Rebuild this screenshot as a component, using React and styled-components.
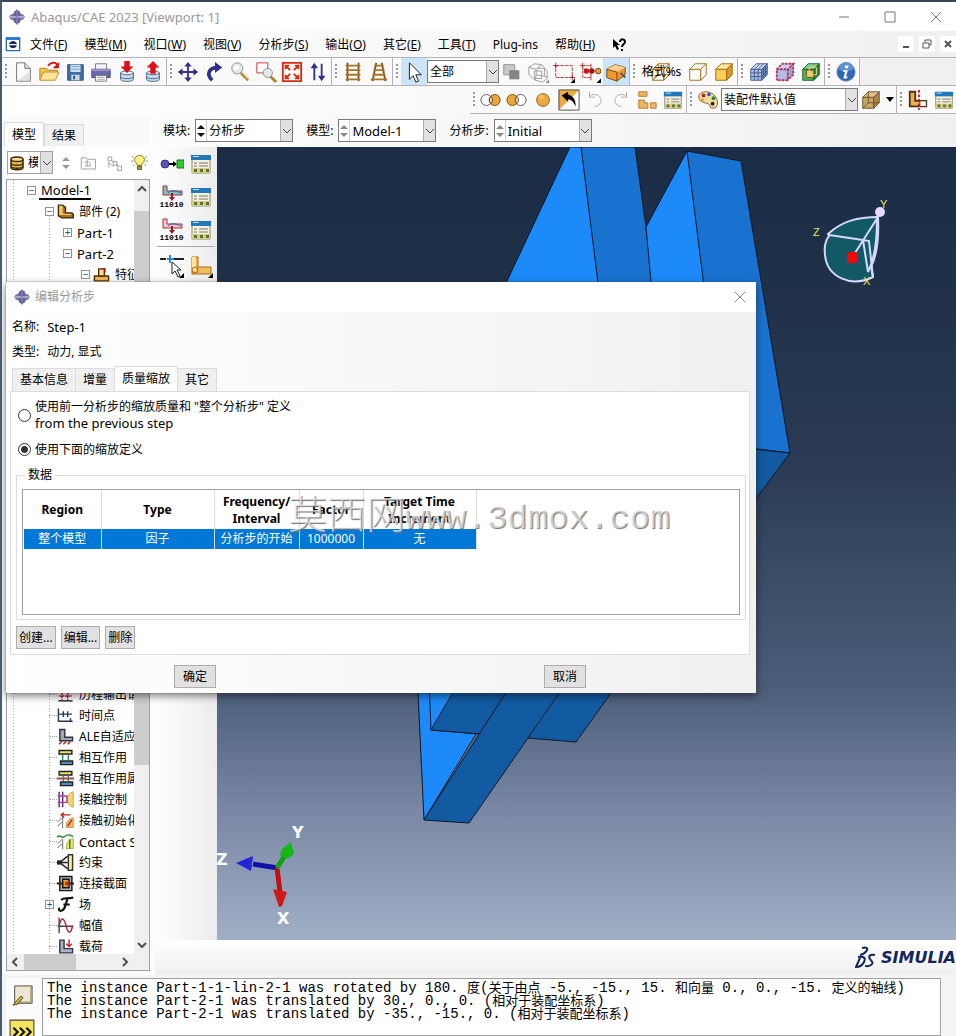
import React, {useState} from 'react';
import styled, {createGlobalStyle} from 'styled-components';


const MENUS = [
    ['文件', 'F'], ['模型', 'M'], ['视口', 'W'], ['视图', 'V'], ['分析步', 'S'],
    ['输出', 'O'], ['其它', 'E'], ['工具', 'T'], ['Plug-ins'], ['帮助', 'H'],
];

const TREE = [
    {depth: 0, label: 'Model-1', open: true, latin: true, current: true},
    {depth: 1, label: '部件 (2)', open: true, icon: 'part'},
    {depth: 2, label: 'Part-1', open: false, latin: true},
    {depth: 2, label: 'Part-2', open: true, latin: true},
    {depth: 3, label: '特征 (1)', open: true, icon: 'feature'},
    {gap: 19},
    {depth: 1, label: '历程输出请求', icon: 'history'},
    {depth: 1, label: '时间点', icon: 'timePoints'},
    {depth: 1, label: 'ALE自适应网格约束', icon: 'ale'},
    {depth: 1, label: '相互作用', icon: 'interaction'},
    {depth: 1, label: '相互作用属性', icon: 'interactionProp'},
    {depth: 1, label: '接触控制', icon: 'contact'},
    {depth: 1, label: '接触初始化', icon: 'contactInit'},
    {depth: 1, label: 'Contact Stabilizations', icon: 'contactStab', latin: true},
    {depth: 1, label: '约束', icon: 'constraint'},
    {depth: 1, label: '连接截面', icon: 'connector'},
    {depth: 1, label: '场', icon: 'field', open: false},
    {depth: 1, label: '幅值', icon: 'amplitude'},
    {depth: 1, label: '载荷', icon: 'load'},
];

const COLUMNS = [
    {title: 'Region', value: '整个模型', width: 77},
    {title: 'Type', value: '因子', width: 113},
    {title: 'Frequency/ Interval', value: '分析步的开始', width: 85},
    {title: 'Factor', value: '1000000', width: 64},
    {title: 'Target Time Increment', value: '无', width: 113},
];

const DIALOG_TABS = ['基本信息', '增量', '质量缩放', '其它'];


const Cube = ({fill = 'none', top = fill, side = fill, stroke = '#a06a10', back}) => (
    <g stroke={stroke} strokeLinejoin="round">
        <path d="M3 9h12v12H3z" fill={fill} />
        <path d="M3 9l6-6h12l-6 6z" fill={top} />
        <path d="M15 9l6-6v12l-6 6z" fill={side} />
        {back && <path d="M9 3v12h12M9 15l-6 6" fill="none" />}
    </g>
);

const Disks = () => (
    <>
        <path d="M5 13v7c0 3 14 3 14 0v-7z" fill="#c9d9ea" stroke="#456585" />
        <ellipse cx="12" cy="13" rx="7" ry="2" fill="#e8f0f8" stroke="#456585" />
        <path d="M5 17c0 3 14 3 14 0" fill="none" stroke="#456585" />
    </>
);

const Corner = () => <path d="M24 19v5h-5z" fill="#000" />;

const Hatch = ({d}) => <path d={d} stroke="#303030" fill="none" />;

const ICONS = {
    app: <><path d="M12 0l5 6 2 2h2l3 4-3 4h-2l-2 2-5 6-5-6-2-2H3l-3-4 3-4h2l2-2z" fill="#7573a8" /><path d="M8 3h8v18H8z" fill="#605e98" /><path d="M1 11h22v2H1z" fill="#f4f4ff" /><path d="M11 3h2v18h-2z" fill="#8886b8" /><path d="M1 12h22" stroke="#6a689e" /></>,
    mdi: <><path d="M2 3h20v19H2z" fill="#fff" stroke="#2468b4" strokeWidth="2" /><path d="M2 2h20v4H2z" fill="#2d79cc" /><path d="M6 12c2-6 10-6 12 0zM6 14c2 6 10 6 12 0z" fill="#22225e" /></>,
    newFile: <><path d="M5 2h9l6 6v14H5z" fill="#fafafa" stroke="#707070" /><path d="M14 2v6h6" fill="#ddd" stroke="#707070" /><path d="M6 21h13v-9z" fill="#e2e2e2" /></>,
    open: <><path d="M2 20V8h7l2 2h10v3" fill="#f4c550" stroke="#a87e1c" /><path d="M2 21l4-9h17l-4 9z" fill="#ffe39a" stroke="#b88c28" /><path d="M11 5c3-4 8-4 10-1" fill="none" stroke="#d01818" strokeWidth="2" /><path d="M23 1v7h-7z" fill="#d01818" /></>,
    save: <><path d="M4 4h17v17H4z" fill="#3e6da8" stroke="#2a4c7c" /><path d="M7 4h11v8H7z" fill="#cfe0ef" /><path d="M8 6h9M8 9h9" stroke="#86a5c5" /><path d="M8 15h9v6H8z" fill="#cdd4dc" /><path d="M10 16h2v4h-2z" fill="#2a4c7c" /></>,
    print: <><path d="M6 3h12v7H6z" fill="#f4f4f8" stroke="#777" /><path d="M2 9h20v9H2z" fill="#6a68ac" stroke="#45447c" /><path d="M2 9h20v2H2z" fill="#9a98cc" /><path d="M6 16h12v6H6z" fill="#fff" stroke="#777" /><path d="M8 18h8M8 20h8" stroke="#aaa" /></>,
    dbDown: <><Disks /><path d="M9 0h6v6h4l-7 7-7-7h4z" fill="#dc1018" /></>,
    dbUp: <><Disks /><path d="M9 14h6V7h4l-7-7-7 7h4z" fill="#dc1018" /></>,
    move: <g fill="#30308c"><path d="M11 5h2v14h-2zM5 11h14v2H5z" /><path d="M12 1l4 5H8zM12 23l4-5H8zM1 12l5-4v8zM23 12l-5-4v8z" /></g>,
    rotate: <><path d="M10 21C3 14 7 8 15 7" fill="none" stroke="#30308c" strokeWidth="4" /><path d="M13 1l8 6-8 6z" fill="#30308c" /></>,
    zoom: <><path d="M13 13l8 8" stroke="#a98428" strokeWidth="3" /><path d="M14 13l8 8" stroke="#e6cf80" /><circle cx="9" cy="8" r="6" fill="#e2e8ee" stroke="#8a8f96" /><circle cx="8" cy="7" r="3" fill="#fff" /></>,
    zoomBox: <><path d="M2 2h12v11H2z" fill="none" stroke="#c43030" strokeWidth="1" /><path d="M17 17l6 6" stroke="#a98428" strokeWidth="3" /><circle cx="14" cy="13" r="5" fill="#e2e8ee" stroke="#8a8f96" /></>,
    fit: <g stroke="#d02c14" fill="none"><path d="M2 2h20v20H2z" strokeWidth="2" /><path d="M5 9V5h4M15 5h4v4M19 15v4h-4M9 19H5v-4M5 5l5 5M19 5l-5 5M19 19l-5-5M5 19l5-5" strokeWidth="2" /></g>,
    upDown: <g fill="#30308c"><path d="M7 5h2v16H7zM15 3h2v16h-2z" /><path d="M8 2l4 6H4zM16 22l4-6h-8z" /></g>,
    track: <><path d="M6 2v20M18 2v20" stroke="#7b5418" strokeWidth="2" /><path d="M4 5h16M4 10h16M4 15h16M4 20h16" stroke="#a5752a" strokeWidth="2" /></>,
    trackPersp: <><path d="M9 2L5 22M15 2l4 20" stroke="#7b5418" strokeWidth="2" /><path d="M7 5h10M6 10h12M5 15h14M3 20h18" stroke="#a5752a" strokeWidth="2" /></>,
    pointer: <path d="M7 2v18l4-4 3 7 3-1-3-7h6z" fill="#fff" stroke="#111" />,
    squares: <><path d="M3 4h12v11H3z" fill="#c8c8c8" stroke="#909090" /><path d="M9 10h11v10H9z" fill="#858585" /></>,
    ghostCubes: <g fill="none" stroke="#999"><path d="M2 7l6-4 8 1 6 7v8l-5 4-8-2-7-6zM2 7l8 2 6-5M10 9v6l12 2M10 15l-1 6M8 11h8v8H8zM11 8h8v8" /><path d="M24 20v4h-4z" fill="#888" stroke="none" /></g>,
    dashedRect: <><path d="M3 5h18v13H3z" fill="none" stroke="#c83030" strokeDasharray="4 1" /><path d="M0 5h6M3 2v6M18 18h6M21 15v6" stroke="#b02020" /><Corner /></>,
    dashedDots: <><path d="M4 5h9M4 7v11h9" fill="none" stroke="#c83030" strokeDasharray="3 1" /><path d="M1 5h6M4 2v6M13 3v18" stroke="#b02020" /><circle cx="8" cy="11" r="3" fill="#c41818" /><circle cx="14" cy="11" r="3" fill="#a01414" /><circle cx="21" cy="11" r="3" fill="#e8a238" stroke="#5c4010" /><Corner /></>,
    orangeCube: <><path d="M2 9l9-5 11 3v8l-9 7-11-4z" fill="#f0982c" stroke="#70420c" /><path d="M2 9l9-5 11 3-9 5z" fill="#ffd08c" /><path d="M2 9l11 3v10" fill="none" stroke="#70420c" /><path d="M17 13l5 5" stroke="#405868" strokeWidth="2" /></>,
    wireCube: <Cube back />,
    hiddenCube: <Cube fill="#fff" />,
    shadedCube: <Cube fill="#f8cd58" top="#ffe69a" side="#d69c24" />,
    meshCube: <><Cube fill="#a8c0e0" top="#cadcf0" side="#7898c8" stroke="#405888" /><path d="M7 9v12M11 9v12M3 13h12l6-6M3 17h12l6-6M7 9l6-6M11 9l6-6M17 7v12M19 5v12" stroke="#405888" fill="none" /></>,
    seedCube: <><Cube fill="#b4bce4" top="#ccd0ec" side="#9ca4d0" stroke="#8878a8" /><path d="M3 9h12v12H3zM3 9l6-6h12l-6 6M21 3v12l-6 6" fill="none" stroke="#c02848" strokeWidth="2" strokeDasharray="2 2" /></>,
    greenCube: <><Cube fill="#58b058" top="#8ad08a" side="#2f8a38" stroke="#145a1c" /><path d="M7 10h8v8H7z" fill="#ecc860" stroke="#6a5414" /><path d="M10 7h8v8h-8z" fill="none" stroke="#e4d890" /></>,
    info: <><circle cx="12" cy="12" r="10" fill="#2e68b4" stroke="#7f93ac" /><path d="M4 9a8 8 0 0 1 16 0c-5 3-11 3-16 0z" fill="#5e92d2" /><path d="M11 5h4l-1 3h-3zM9 10h5l-2 7h2l-1 2H9l2-7H9z" fill="#fff" /></>,
    unionRight: <><circle cx="16" cy="12" r="6" fill="#eda63a" stroke="#6c4c18" /><circle cx="7" cy="12" r="6" fill="none" stroke="#555" /><path d="M12 8a6 6 0 0 1 0 8 6 6 0 0 1 0-8z" fill="#f6cf88" stroke="#555" /></>,
    unionLeft: <><circle cx="7" cy="12" r="6" fill="#eda63a" stroke="#6c4c18" /><circle cx="16" cy="12" r="6" fill="#fff" stroke="#555" /><path d="M12 8a6 6 0 0 1 0 8 6 6 0 0 1 0-8z" fill="#f6cf88" stroke="#555" /></>,
    circle: <><circle cx="12" cy="12" r="7" fill="#eda63a" stroke="#8c6828" /><circle cx="10" cy="9" r="3" fill="#f4bc64" /></>,
    invert: <><path d="M1 1h22v22H1z" fill="#fff" /><path d="M1 1h22L1 23z" fill="#f0aa40" /><path d="M1 1h22v22H1z" fill="none" stroke="#444" /><path d="M4 7l7-4v3c6 2 9 7 8 13-2-5-4-7-8-8v3z" fill="#000" /></>,
    undo: <g fill="none" stroke="#aaa"><path d="M6 8c6-5 15 0 12 7-1 3-4 4-6 4" /><path d="M6 3v6h6" /></g>,
    redo: <g fill="none" stroke="#aaa"><path d="M18 8c-6-5-15 0-12 7 1 3 4 4 6 4" /><path d="M18 3v6h-6" /></g>,
    blocks: <g fill="#f2b45c" stroke="#b07c38"><path d="M3 3h9v5H3zM3 12h6v3h4v6H3z" /><path d="M16 15h6v6h-6z" /></g>,
    manager: <><path d="M3 6h18v15H3z" fill="#f4f1dc" stroke="#8c8868" /><path d="M2 3h20v5H2z" fill="#2278b8" /><path d="M4 4h6v1H4z" fill="#c0e4ff" /><path d="M5 11h3M10 11h9M5 14h3M10 14h9" stroke="#777" /><path d="M3 16h18v5H3z" fill="#d6cc90" /><path d="M5 17h3v3H5zM11 17h3v3h-3zM17 17h3v3h-3z" fill="#5e7428" /></>,
    palette: <><path d="M2 7c3-6 14-5 18 1s3 13-3 13c-4 0-2-4-5-5S1 15 2 7z" fill="#f2d9a0" stroke="#7d6230" /><circle cx="7" cy="7" r="2" fill="#c02020" /><circle cx="13" cy="6" r="2" fill="#2858b8" /><circle cx="18" cy="10" r="2" fill="#208838" /><circle cx="6" cy="12" r="2" fill="#e4a820" /><circle cx="17" cy="16" r="2" fill="#222" /></>,
    tanCube: <Cube fill="#c8a468" top="#dcc094" side="#ac8448" stroke="#6c5024" back />,
    section: <><path d="M3 3h6v10h12v6H3z" fill="#f0b050" stroke="#4c3410" strokeWidth="2" /><path d="M14 13h7v6h-7z" fill="#fff" stroke="#4c3410" /><path d="M13 1v22" stroke="#c01818" strokeWidth="2" strokeDasharray="3 2" /></>,
    coil: <><path d="M4 8v10c0 4 16 4 16 0V8z" fill="#e8bc48" stroke="#3c2c08" strokeWidth="2" /><ellipse cx="12" cy="7" rx="8" ry="3" fill="#f8e090" stroke="#3c2c08" strokeWidth="2" /><path d="M4 12c0 4 16 4 16 0M4 16c0 4 16 4 16 0" fill="none" stroke="#3c2c08" strokeWidth="2" /></>,
    folderUp: <g fill="none" stroke="#888"><path d="M3 5h6l2 2h11v13H3z" /><path d="M8 16h7v-4M8 12l3-3 3 3M11 9v7" /></g>,
    chain: <g fill="none" stroke="#888"><path d="M4 4h5v5H4zM11 10h5v5h-5zM17 16h5v6h-5zM9 8l2 3M15 13l2 3M5 18v-7l6 6" /></g>,
    bulb: <><path d="M9 16c0-3-4-4-4-8a7 6 0 0 1 14 0c0 4-4 5-4 8z" fill="#fff27a" stroke="#5a4a08" /><path d="M9 17h6v5H9z" fill="#a89048" stroke="#4a3c10" /><path d="M1 3l3 2M0 10h3M23 3l-3 2M24 10h-3M3 17l2-2M21 17l-2-2" stroke="#7a6408" /></>,
    stepLink: <><circle cx="5" cy="12" r="4" fill="#5558b8" stroke="#30348c" /><path d="M9 12h5" stroke="#000" strokeWidth="2" /><path d="M13 9l4 3-4 3z" fill="#000" /><path d="M17 8h7v8h-7z" fill="#30c830" stroke="#187818" /></>,
    part: <><path d="M2 3h6l4 3v8h9l2 2v5H7l-5-3z" fill="#a87420" stroke="#3c2808" strokeWidth="2" /><path d="M3 4h5v11h12v2H3z" fill="#f4c460" /></>,
    feature: <><path d="M2 14h20v7H2z" fill="#f0b850" stroke="#4c3408" strokeWidth="2" /><path d="M8 4h8v10H8z" fill="#fadc90" stroke="#4c3408" strokeWidth="2" /><path d="M12 4h5v5" fill="none" stroke="#c02020" strokeWidth="2" /></>,
    history: <><path d="M3 6h18M3 14h18M7 2v18M15 2v18" stroke="#b02828" strokeWidth="2" strokeDasharray="3 1" /><path d="M2 21h20" stroke="#223" strokeWidth="2" /></>,
    timePoints: <g stroke="#223850" strokeWidth="2" fill="none"><path d="M2 2v18h20" /><path d="M3 10h18M9 6v8M15 6v8M19 16v5" /></g>,
    ale: <><path d="M4 2h7v11h11v5H4z" fill="#a0a8b8" stroke="#2c3440" strokeWidth="2" /><path d="M3 23l4-4M9 23l4-4M15 23l4-4" stroke="#b02020" strokeWidth="2" /></>,
    interaction: <><path d="M3 2h18v5H3z" fill="#f0e470" stroke="#222" strokeWidth="2" /><path d="M5 17h17v5H5z" fill="#5888b8" stroke="#222" strokeWidth="2" /><path d="M8 8v8M16 8v8" stroke="#2c8860" strokeWidth="2" /></>,
    interactionProp: <><path d="M3 2h18v5H3z" fill="#f0e470" stroke="#222" strokeWidth="2" /><path d="M5 17h17v5H5z" fill="#5888b8" stroke="#222" strokeWidth="2" /><path d="M9 8v8M16 8v8" stroke="#2c8860" strokeWidth="2" /><path d="M0 12h24" stroke="#a05848" strokeWidth="3" /></>,
    contact: <><path d="M23 1c-11 2-11 20 0 22z" fill="#f4d468" stroke="#b89838" /><path d="M3 1v22M8 1v22" stroke="#582868" strokeWidth="2" /><path d="M1 7h14M1 16h14M14 7v9" fill="none" stroke="#a040b0" strokeWidth="2" /></>,
    contactInit: <><path d="M23 8c-9 2-10 8-10 14h10z" fill="#f8b860" stroke="#b08038" /><Hatch d="M8 8v15M7 8L1 14M7 14L1 20" /><path d="M6 4h13M10 1L6 4l4 4M15 20l6-9" fill="none" stroke="#c02020" strokeWidth="2" /></>,
    contactStab: <><path d="M23 8c-9 2-10 8-10 14h10z" fill="#f0e468" stroke="#8a9828" /><Hatch d="M8 9v14M7 9l-6 6M7 15l-6 6" /><path d="M0 6c4-6 6 3 11-1s7-2 12 0M18 9v13" fill="none" stroke="#208030" strokeWidth="2" /></>,
    constraint: <><path d="M16 1h6v22h-6z" fill="#f8f080" stroke="#333" strokeWidth="2" /><path d="M15 3L4 12l11 9M4 12h11" fill="none" stroke="#222" strokeWidth="2" /><path d="M0 9h6v6H0z" fill="#222" /></>,
    connector: <><path d="M4 2h17v20H4z" fill="#b4bcc4" stroke="#111" strokeWidth="2" /><path d="M8 6h9v12H8z" fill="#f0a030" stroke="#111" strokeWidth="2" /><circle cx="14" cy="12" r="3" fill="#c83020" /><path d="M0 12h9M17 12h7" stroke="#222" strokeWidth="3" /></>,
    field: <g fill="none" stroke="#111" strokeWidth="3"><path d="M6 6c3-5 9-1 17-4M15 3c-3 8-3 18-10 18-3 0-3-3-1-4M9 12h9" /></g>,
    amplitude: <><path d="M3 1v22M1 13h22" stroke="#445" strokeWidth="2" /><path d="M3 13c3-15 7-12 10 0s7 10 9-1" fill="none" stroke="#b02830" strokeWidth="2" /></>,
    load: <><path d="M4 3h6v12h12v6H4z" fill="#aab4c4" stroke="#2c3440" strokeWidth="2" /><path d="M17 2v9M13 8l4 4 4-4" fill="none" stroke="#c02020" strokeWidth="2" /></>,
    brush: <><path d="M4 1h19v19H4z" fill="#ece7d0" stroke="#444" /><path d="M22 2v17H5" fill="none" stroke="#a8a078" strokeWidth="2" /><path d="M11 12L2 22l5-1 6-7z" fill="#d8b848" stroke="#4c3c10" /></>,
    prompt: <><path d="M1 1h22v22H1z" fill="#f4e45c" stroke="#444" /><path d="M4 8l4 4-4 4M10 8l4 4-4 4M16 8l4 4-4 4" fill="none" stroke="#111" strokeWidth="2" /></>,
    datum: <><path d="M0 5h6M14 5h10" stroke="#222" strokeWidth="2" /><path d="M7 5h7M10 1v8" stroke="#2888d8" strokeWidth="2" /><path d="M12 8v12l3-3 3 6 2-1-3-6h4z" fill="#fff" stroke="#222" /><Corner /></>,
    partition: <><path d="M3 3h6v10h13v7H3z" fill="#f4bc58" stroke="#a06c18" /><path d="M3 3h4v14H3z" fill="#ffe49c" /><circle cx="6" cy="16" r="3" fill="none" stroke="#b06010" /><Corner /></>,
};

const OutputDrawing = ({tint}) => (
    <svg width="24" height="16" viewBox="0 0 24 16" aria-hidden="true">
        <path d="M3 1h4v5h15v4H3z" fill={tint} stroke="#a03048" />
        <path d="M8 8c4-4 8-2 13 0" fill="none" stroke="#2868a8" />
        <path d="M12 8v5" stroke="#a01828" strokeWidth="2" />
        <path d="M9 12h6l-3 4z" fill="#a01828" />
    </svg>
);

const Icon = ({name, size = 22}) => (
    <svg width={size} height={size} viewBox="0 0 24 24" aria-hidden="true">{ICONS[name]}</svg>
);

const Chevron = ({dir = 'down'}) => {
    const paths = {down: 'M1 3l4 4 4-4', up: 'M1 7l4-4 4 4', left: 'M7 1L3 5l4 4', right: 'M3 1l4 4-4 4'};
    return (
        <svg width="10" height="10" viewBox="0 0 10 10" aria-hidden="true">
            <path d={paths[dir]} fill="none" stroke="#505050" strokeWidth="2" />
        </svg>
    );
};

const SmallChevron = () => (
    <svg width="10" height="10" viewBox="0 0 10 10" aria-hidden="true">
        <path d="M1 3l4 4 4-4" fill="none" stroke="#444" />
    </svg>
);

const SpinMarks = ({color = '#222', size = 16}) => (
    <svg width="10" height={size} viewBox="0 0 10 16" aria-hidden="true">
        <path d="M1 6l4-4 4 4zM1 10l4 4 4-4z" fill={color} />
    </svg>
);

const Tools = ({names, active}) => names.map(name => (
    <ToolButton key={name} type="button" aria-label={name} $active={name === active}>
        <Icon name={name} />
    </ToolButton>
));

const Combo = ({label, value, width, spin, latin}) => (
    <ComboBox $width={width}>
        {spin && <SpinCell><SpinMarks color={spin} /></SpinCell>}
        <ComboSelect aria-label={label} defaultValue={value} $latin={latin}>
            <option>{value}</option>
        </ComboSelect>
        <ComboArrow><SmallChevron /></ComboArrow>
    </ComboBox>
);

const TreeItem = ({item}) => (
    <TreeRow $depth={item.depth}>
        {item.open === undefined
            ? <Leaf />
            : <Expander type="button" aria-label={`${item.label} toggle`}>{item.open ? '−' : '+'}</Expander>}
        {item.icon && <Icon name={item.icon} size={17} />}
        <TreeLabel $latin={item.latin} $current={item.current} $icon={item.icon}>{item.label}</TreeLabel>
    </TreeRow>
);

const Scene = () => (
    <SceneSvg role="img" aria-label="Viewport: 1">
        <defs>
            <linearGradient id="sky" x1="0" y1="0" x2="0" y2="1">
                <stop offset="0" stopColor="#1b2c47" />
                <stop offset="0.2" stopColor="#203149" />
                <stop offset="0.4" stopColor="#2b3b56" />
                <stop offset="0.68" stopColor="#4b5d78" />
                <stop offset="0.84" stopColor="#7a88a5" />
                <stop offset="1" stopColor="#a0afc6" />
            </linearGradient>
        </defs>
        <rect width="100%" height="100%" fill="url(#sky)" />
        <g transform="translate(-217 -147)">
            <g stroke="#0a1828" strokeLinejoin="round">
                <path d="M570 147L420 466l-2 227 6 127 230-380-73-293z" fill="#1c8af8" />
                <path d="M581 147h54l11 80 30 260-60-60z" fill="#1a72d0" />
                <path d="M687 151l-41 76 20 220 100 3z" fill="#1c8af8" />
                <path d="M687 151l54 10 49 292-66-8z" fill="#1a72d0" />
                <path d="M700 443l90 10-179 240-35 49-48-4z" fill="#125aa2" />
                <path d="M429 680l2 50 49 4 26-41v-13z" fill="#1c8af8" />
                <path d="M460 680l-29 50 49 4 34-54z" fill="#125aa2" />
                <path d="M514 680l-90 140 45 3 59-85 40-58z" fill="#125aa2" />
            </g>
            <path d="M828 234c14-13 30-17 50-17 1 21-1 38-7 50l2 10c-22 11-46 0-48-22-1-8 0-14 4-19z" fill="#125866" stroke="#d8d8ff" strokeWidth="2" />
            <path d="M829 235l34 5 6 1 4 36M863 240l5 32M878 217l-23 36M877 220c0 20-3 40-9 52" fill="none" stroke="#d8d8ff" strokeWidth="2" />
            <circle cx="880" cy="212" r="5" fill="#e4d8ff" />
            <rect x="847" y="252" width="11" height="11" rx="2" fill="#ee0808" />
            <AxisMark x="813" y="236">Z</AxisMark>
            <AxisMark x="880" y="208">Y</AxisMark>
            <AxisMark x="863" y="285">X</AxisMark>
            <path d="M278 868l-25-4" stroke="#1010a8" strokeWidth="5" />
            <path d="M236 863l17-7-2 15z" fill="#2424d8" />
            <path d="M277 868l3 24" stroke="#c01010" strokeWidth="5" />
            <path d="M273 889l14 3-5 14-3 1z" fill="#d01818" />
            <path d="M277 868l10-16" stroke="#10a010" strokeWidth="5" />
            <path d="M282 849l9-7 3 12-7 5-7-4z" fill="#14b814" />
            <AxisName x="216" y="865">Z</AxisName>
            <AxisName x="292" y="838">Y</AxisName>
            <AxisName x="277" y="924">X</AxisName>
        </g>
    </SceneSvg>
);

const StepDialog = () => {
    const [tab, setTab] = useState('质量缩放');

    return (
        <Dialog role="dialog" aria-label="编辑分析步">
            <DialogTitle>
                <Icon name="app" size={16} />
                <TitleText>编辑分析步</TitleText>
                <DialogClose type="button" aria-label="close">
                    <svg width="12" height="12"><path d="M1 1l10 10M11 1L1 11" stroke="#888" /></svg>
                </DialogClose>
            </DialogTitle>
            <DialogBody>
                <InfoLine>名称:<LatinText>Step-1</LatinText></InfoLine>
                <InfoLine>类型:<span>动力, 显式</span></InfoLine>
                <TabList role="tablist">
                    {DIALOG_TABS.map(t => (
                        <DialogTab key={t} type="button" role="tab" aria-selected={t === tab} $active={t === tab} onClick={() => setTab(t)}>
                            {t}
                        </DialogTab>
                    ))}
                </TabList>
                <TabPanel>
                    <RadioLabel>
                        <Radio name="scaling" />
                        <span>使用前一分析步的缩放质量和 "整个分析步" 定义<br /><LatinText>from the previous step</LatinText></span>
                    </RadioLabel>
                    <RadioLabel>
                        <Radio name="scaling" defaultChecked />
                        <span>使用下面的缩放定义</span>
                    </RadioLabel>
                    <DataGroup>
                        <legend>数据</legend>
                        <TableFrame>
                            <Table>
                                <colgroup>
                                    {COLUMNS.map(c => <Col key={c.title} $width={c.width} />)}
                                </colgroup>
                                <thead>
                                    <tr>{COLUMNS.map(c => <th key={c.title}>{c.title}</th>)}</tr>
                                </thead>
                                <tbody>
                                    <tr>{COLUMNS.map(c => <td key={c.title}>{c.value}</td>)}</tr>
                                </tbody>
                            </Table>
                        </TableFrame>
                    </DataGroup>
                    <PanelButtons>
                        <PushButton type="button">创建...</PushButton>
                        <PushButton type="button">编辑...</PushButton>
                        <PushButton type="button">删除</PushButton>
                    </PanelButtons>
                </TabPanel>
                <DialogButtons>
                    <PushButton type="button" $wide>确定</PushButton>
                    <PushButton type="button" $wide>取消</PushButton>
                </DialogButtons>
            </DialogBody>
        </Dialog>
    );
};

export default () => (
    <>
        <GlobalStyle />
        <Window>
            <TitleBar>
                <Icon name="app" size={16} />
                <TitleText $latin>Abaqus/CAE 2023 [Viewport: 1]</TitleText>
                <WindowButton type="button" aria-label="minimize"><svg width="12" height="12"><path d="M1 6h10" stroke="#777" /></svg></WindowButton>
                <WindowButton type="button" aria-label="maximize"><svg width="12" height="12"><path d="M1 1h10v10H1z" fill="none" stroke="#777" /></svg></WindowButton>
                <WindowButton type="button" aria-label="close"><svg width="12" height="12"><path d="M1 1l10 10M11 1L1 11" stroke="#777" /></svg></WindowButton>
            </TitleBar>
            <MenuBar>
                <Icon name="mdi" size={16} />
                <Menus>
                    {MENUS.map(([text, key]) => (
                        <MenuButton key={text} type="button">{text}{key && <>(<u>{key}</u>)</>}</MenuButton>
                    ))}
                    <MenuButton type="button" aria-label="context help">
                        <svg width="14" height="14"><path d="M1 1v9l2-2 2 4 2-1-2-4h3z" fill="#000" /><path d="M8 4c0-4 5-3 5 0 0 2-3 2-3 5M9 12h2" fill="none" stroke="#000" strokeWidth="2" /></svg>
                    </MenuButton>
                </Menus>
                <MdiButton type="button" aria-label="minimize viewport"><svg width="10" height="10"><path d="M2 8h6" stroke="#555" strokeWidth="2" /></svg></MdiButton>
                <MdiButton type="button" aria-label="restore viewport"><svg width="10" height="10"><path d="M3 3V1h6v5H7M1 4h6v5H1z" fill="none" stroke="#555" /></svg></MdiButton>
                <MdiButton type="button" aria-label="close viewport"><svg width="10" height="10"><path d="M2 2l6 6M8 2L2 8" stroke="#555" strokeWidth="2" /></svg></MdiButton>
            </MenuBar>
            <Toolbar>
                <ToolGroup><Grip /><Tools names={['newFile', 'open', 'save', 'print', 'dbDown', 'dbUp']} /></ToolGroup>
                <ToolGroup><Grip /><Tools names={['move', 'rotate', 'zoom', 'zoomBox', 'fit', 'upDown']} /></ToolGroup>
                <ToolGroup><Grip /><Tools names={['track', 'trackPersp']} /></ToolGroup>
                <ToolGroup>
                    <Grip />
                    <Tools names={['pointer']} active="pointer" />
                    <Combo label="选择" value="全部" width={72} />
                    <Tools names={['squares']} />
                    <Tools names={['ghostCubes', 'dashedRect', 'dashedDots', 'orangeCube']} active="orangeCube" />
                </ToolGroup>
                <ToolGroup>
                    <Grip />
                    <FormatButton type="button"><Icon name="wireCube" /><span>格式%s</span></FormatButton>
                    <Tools names={['hiddenCube', 'shadedCube']} />
                </ToolGroup>
                <ToolGroup><Grip /><Tools names={['meshCube', 'seedCube', 'greenCube']} /></ToolGroup>
                <ToolGroup><Grip /><Tools names={['info']} /></ToolGroup>
            </Toolbar>
            <SecondToolbar>
                <ToolGroup><Grip /><Tools names={['unionRight', 'unionLeft', 'circle', 'invert', 'undo', 'redo', 'blocks', 'manager']} /></ToolGroup>
                <ToolGroup>
                    <Grip />
                    <Tools names={['palette']} />
                    <Combo label="颜色" value="装配件默认值" width={137} />
                    <Tools names={['tanCube']} />
                    <DropButton type="button" aria-label="more"><svg width="8" height="5"><path d="M0 0h8L4 5z" /></svg></DropButton>
                </ToolGroup>
                <ToolGroup><Grip /><Tools names={['section', 'manager']} /></ToolGroup>
            </SecondToolbar>
            <Main>
                <Sidebar>
                    <SideTabs role="tablist">
                        <SideTab type="button" role="tab" aria-selected="true" $active>模型</SideTab>
                        <SideTab type="button" role="tab" aria-selected="false">结果</SideTab>
                    </SideTabs>
                    <SideTools>
                        <SideCombo>
                            <Icon name="coil" size={18} />
                            <ComboSelect aria-label="模型数据库" defaultValue="模型数据库"><option>模型数据库</option></ComboSelect>
                            <ComboArrow><SmallChevron /></ComboArrow>
                        </SideCombo>
                        <SpinMarks color="#999" size={18} />
                        <Icon name="folderUp" size={18} />
                        <Icon name="chain" size={18} />
                        <Icon name="bulb" size={17} />
                    </SideTools>
                    <TreeFrame>
                        <TreeScroll>
                            <Tree>
                                {TREE.map((item, idx) => item.gap
                                    ? <TreeGap key={idx} $rows={item.gap} />
                                    : <TreeItem key={idx} item={item} />
                                )}
                            </Tree>
                            <VerticalBar>
                                <Chevron dir="up" />
                                <VerticalTrack><VerticalThumb /></VerticalTrack>
                                <Chevron />
                            </VerticalBar>
                        </TreeScroll>
                        <HorizontalBar>
                            <Chevron dir="left" />
                            <HorizontalThumb />
                            <Chevron dir="right" />
                        </HorizontalBar>
                    </TreeFrame>
                </Sidebar>
                <Workspace>
                    <ContextBar>
                        <ContextLabel>模块:<Combo label="模块" value="分析步" width={98} spin="#111" /></ContextLabel>
                        <ContextLabel>模型:<Combo label="模型" value="Model-1" width={98} spin="#888" latin /></ContextLabel>
                        <ContextLabel>分析步:<Combo label="分析步" value="Initial" width={98} spin="#888" latin /></ContextLabel>
                    </ContextBar>
                    <Stage>
                        <Toolbox>
                            <BoxButton type="button" aria-label="create step"><Icon name="stepLink" size={24} /></BoxButton>
                            <BoxButton type="button" aria-label="step manager"><Icon name="manager" size={24} /></BoxButton>
                            <BoxButton type="button" aria-label="field output"><OutputDrawing tint="#80c0b8" /><Digits>11010</Digits></BoxButton>
                            <BoxButton type="button" aria-label="field output manager"><Icon name="manager" size={24} /></BoxButton>
                            <BoxButton type="button" aria-label="history output"><OutputDrawing tint="#f0c8c8" /><Digits>11010</Digits></BoxButton>
                            <BoxButton type="button" aria-label="history output manager"><Icon name="manager" size={24} /></BoxButton>
                            <BoxRule />
                            <BoxButton type="button" aria-label="datum"><Icon name="datum" size={24} /></BoxButton>
                            <BoxButton type="button" aria-label="partition"><Icon name="partition" size={24} /></BoxButton>
                        </Toolbox>
                        <Viewport><Scene /></Viewport>
                    </Stage>
                    <Brand>
                        <svg width="22" height="24" viewBox="0 0 22 24" aria-hidden="true">
                            <g fill="none" stroke="#12265c" strokeWidth="2">
                                <path d="M7 2c4-1 6 0 5 2s-3 4-7 5" />
                                <path d="M3 11c6-1 8 1 6 5s-5 5-8 5l4-9" />
                                <path d="M20 9c-5-1-7 1-5 4s4 4 1 6-4 1-6 1" />
                            </g>
                        </svg>
                        <span>SIMULIA</span>
                    </Brand>
                </Workspace>
            </Main>
            <MessageArea>
                <MessageTabs>
                    <MessageTab type="button" aria-label="messages"><Icon name="brush" size={22} /></MessageTab>
                    <MessageTab type="button" aria-label="command line"><Icon name="prompt" size={26} /></MessageTab>
                </MessageTabs>
                <Log role="log">
                    <p>The instance Part-1-1-lin-2-1 was rotated by 180. <Han>度</Han>(<Han>关于由点</Han> -5., -15., 15. <Han>和向量</Han> 0., 0., -15. <Han>定义的轴线</Han>)</p>
                    <p>The instance Part-2-1 was translated by 30., 0., 0. (<Han>相对于装配坐标系</Han>)</p>
                    <p>The instance Part-2-1 was translated by -35., -15., 0. (<Han>相对于装配坐标系</Han>)</p>
                </Log>
            </MessageArea>
            <StepDialog />
            <Watermark><span>莫西网</span>www.3dmox.com</Watermark>
        </Window>
    </>
);


const GlobalStyle = createGlobalStyle`
  * {
    box-sizing: border-box;
  }

  body {
    margin: 0;
    color: #000;
    background: #f0f0f0;
    font: 12px/16px "Noto Sans", "Noto Sans CJK SC", sans-serif;
  }

  button, select, input {
    margin: 0;
    color: inherit;
    font: inherit;
  }

  svg {
    display: block;
    flex: none;
  }
`;

const Window = styled.div`
  position: relative;
  display: flex;
  flex-direction: column;
  height: 100vh;
  overflow: hidden;
  border-top: 2px solid #3c4456;
  border-left: 2px solid #4c5a70;
  background: linear-gradient(90deg, #fff, #f0f0f0);
`;

const PlainButton = styled.button`
  display: flex;
  align-items: center;
  justify-content: center;
  padding: 0;
  border: 0;
  background: none;
`;

const TitleBar = styled.div`
  display: flex;
  flex: none;
  gap: 6px;
  align-items: center;
  height: 29px;
  padding-left: 7px;
  background: #fff;
`;

const TitleText = styled.span`
  flex: 1;
  color: #999;
  font-size: ${p => p.$latin ? 13 : 12}px;
`;

const WindowButton = styled(PlainButton)`
  width: 40px;
  height: 28px;
`;

const MenuBar = styled.div`
  display: flex;
  flex: none;
  align-items: center;
  height: 26px;
  padding: 0 0 0 3px;
`;

const Menus = styled.div`
  display: flex;
  flex: 1;
  gap: 17px;
  padding: 1px 0 0 9px;
`;

const MenuButton = styled(PlainButton)`
  display: block;
  white-space: nowrap;
`;

const MdiButton = styled(PlainButton)`
  width: 16px;
  height: 16px;
  margin-left: 5px;
  background: #fff;
`;

const Toolbar = styled.div`
  display: flex;
  flex: none;
  height: 29px;
  border-top: 1px solid #b4b4b4;
  border-bottom: 1px solid #b4b4b4;
  background: #f0f0f0;
`;

const SecondToolbar = styled(Toolbar)`
  height: 28px;
  padding-left: 468px;
  border-top: 0;
  border-bottom: 0;
  background: linear-gradient(90deg, #fff, #f4f4f4);
`;

const ToolGroup = styled.div`
  display: flex;
  flex: none;
  align-items: center;
  border-right: 1px solid #b4b4b4;
  background: #fafafa;

  ${SecondToolbar} & {
    border-bottom: 1px solid #b4b4b4;
  }
`;

const Grip = styled.div`
  width: 2px;
  height: 16px;
  margin: 0 3px;
  background: repeating-linear-gradient(#9a9a9a 0 2px, transparent 2px 4px);
`;

const ToolButton = styled(PlainButton)`
  width: 26px;
  height: 27px;
  background: ${p => p.$active ? '#cce4f7' : 'none'};
`;

const FormatButton = styled(PlainButton)`
  display: grid;
  place-items: center;
  width: 47px;
  height: 27px;

  > * {
    grid-area: 1 / 1;
  }
`;

const DropButton = styled(PlainButton)`
  width: 12px;
  height: 27px;
`;

const ComboBox = styled.span`
  display: flex;
  align-items: stretch;
  width: ${p => p.$width}px;
  height: 23px;
  border: 1px solid #7a7a7a;
  background: #fff;
`;

const ComboSelect = styled.select`
  flex: 1;
  min-width: 0;
  padding: 0 2px;
  border: 0;
  background: none;
  font-size: ${p => p.$latin ? 13 : 12}px;
  appearance: none;
`;

const ComboArrow = styled.span`
  display: flex;
  flex: none;
  align-items: center;
  justify-content: center;
  width: 12px;
  border-left: 1px solid #adadad;
  background: #e1e1e1;
  pointer-events: none;
`;

const SpinCell = styled.span`
  display: flex;
  align-items: center;
  border-right: 1px solid #ccc;
`;

const Main = styled.div`
  display: flex;
  flex: 1;
  min-height: 0;
`;

const Sidebar = styled.div`
  display: flex;
  flex: none;
  flex-direction: column;
  width: 148px;
  padding: 8px 0 4px 2px;
  background: #fafafa;
`;

const SideTabs = styled.div`
  display: flex;
  align-items: flex-end;
  height: 24px;
`;

const SideTab = styled(PlainButton)`
  height: ${p => p.$active ? 24 : 22}px;
  padding: 0 7px;
  border: 1px solid #dcdcdc;
  border-bottom: 0;
  background: ${p => p.$active ? '#fff' : '#f0f0f0'};
`;

const SideTools = styled.div`
  display: flex;
  align-items: center;
  justify-content: space-between;
  height: 33px;
  padding: 0 2px 0 3px;
  background: #fff;
`;

const SideCombo = styled.span`
  display: flex;
  width: 46px;
  height: 23px;
  align-items: stretch;
  border: 1px solid #a0a0a0;
  background: #fff;

  > svg {
    margin: 2px 0;
  }
`;

const TreeFrame = styled.div`
  display: flex;
  flex: 1;
  flex-direction: column;
  min-height: 0;
  margin-left: 2px;
  border: 1px solid #a0a0a0;
  background: #fff;
`;

const TreeScroll = styled.div`
  display: flex;
  flex: 1;
  min-height: 0;
`;

const Tree = styled.div`
  flex: 1;
  min-width: 0;
  overflow: hidden;
  background:
    repeating-linear-gradient(#aaa 0 1px, transparent 1px 3px) 6px 0 / 1px 100% no-repeat,
    repeating-linear-gradient(#aaa 0 1px, transparent 1px 3px) 42px 30px / 1px 100% no-repeat;
`;

const TreeRow = styled.div`
  display: flex;
  align-items: center;
  height: 21px;
  padding-left: ${p => 20 + p.$depth * 18}px;
  white-space: nowrap;
`;

const TreeGap = styled.div`
  height: ${p => p.$rows * 21}px;
`;

const Expander = styled(PlainButton)`
  flex: none;
  width: 9px;
  height: 9px;
  margin-right: 3px;
  border: 1px solid #919191;
  background: #fff;
  color: #2f4a8a;
  font-size: 10px;
  line-height: 7px;
`;

const Leaf = styled.span`
  flex: none;
  width: 8px;
  margin-left: 4px;
  border-top: 1px dotted #aaa;
`;

const TreeLabel = styled.span`
  padding-left: ${p => p.$icon ? 5 : 2}px;
  font-size: ${p => p.$latin ? 13 : 12}px;
  border-bottom: ${p => p.$current ? '2px solid #000' : '0'};
`;

const VerticalBar = styled.div`
  display: flex;
  flex: none;
  flex-direction: column;
  align-items: center;
  width: 15px;
  padding: 4px 0;
  background: #f0f0f0;
`;

const VerticalTrack = styled.div`
  flex: 1;
  align-self: stretch;
  padding-top: 17px;
`;

const VerticalThumb = styled.div`
  height: 76%;
  background: #cdcdcd;
`;

const HorizontalBar = styled.div`
  display: flex;
  align-items: center;
  height: 16px;
  padding: 0 19px 0 3px;
  background: #f0f0f0;
`;

const HorizontalThumb = styled.div`
  width: 52px;
  height: 16px;
  margin: 0 auto 0 4px;
  background: #cdcdcd;
`;

const Workspace = styled.div`
  display: flex;
  flex: 1;
  flex-direction: column;
  min-width: 0;
  padding-left: 5px;
`;

const ContextBar = styled.div`
  display: flex;
  flex: none;
  align-items: center;
  gap: 13px;
  height: 33px;
  padding-left: 8px;
`;

const ContextLabel = styled.label`
  display: flex;
  align-items: center;
  gap: 5px;
`;

const Stage = styled.div`
  display: flex;
  flex: 1;
  min-height: 0;
`;

const Toolbox = styled.div`
  display: grid;
  flex: none;
  grid-template-columns: 29px 29px;
  grid-auto-rows: max-content;
  width: 62px;
  padding-left: 2px;
  background: linear-gradient(90deg, #fff, #ececec);
`;

const BoxButton = styled(PlainButton)`
  flex-direction: column;
  height: 33px;
`;

const Digits = styled.span`
  font: bold 8px/8px "Liberation Mono", monospace;
`;

const BoxRule = styled.div`
  grid-column: 1 / 3;
  height: 1px;
  margin-bottom: 2px;
  background: #a8a8a8;
`;

const Viewport = styled.div`
  flex: 1;
  min-width: 0;
  overflow: hidden;
`;

const SceneSvg = styled.svg`
  width: 100%;
  height: 100%;
`;

const AxisMark = styled.text`
  fill: #e8e850;
  font: 11px "Liberation Sans", sans-serif;
`;

const AxisName = styled.text`
  fill: #fff;
  font: bold 16px "DejaVu Sans", sans-serif;
`;

const Brand = styled.div`
  display: flex;
  flex: none;
  align-items: center;
  justify-content: flex-end;
  gap: 4px;
  height: 35px;
  background: linear-gradient(#fff, #f0f0f0);
  color: #12265c;
  font: italic bold 16px/20px "DejaVu Sans", sans-serif;
`;

const MessageArea = styled.div`
  display: flex;
  flex: none;
  height: 61px;
  padding: 3px 15px 0 4px;
  background: #f4f4f4;
`;

const MessageTabs = styled.div`
  display: flex;
  flex-direction: column;
  width: 36px;
`;

const MessageTab = styled(PlainButton)`
  flex: none;
  height: 36px;
  padding-right: 4px;
  background: #fcfcfc;
`;

const Log = styled.div`
  flex: 1;
  min-width: 0;
  overflow: hidden;
  padding: 3px 4px;
  border: 1px solid #a0a0a0;
  background: #fff;
  font: 14px/13px "Liberation Mono", "Noto Sans CJK SC", monospace;
  white-space: pre;

  p {
    height: 13px;
    margin: 0;
  }
`;

const Han = styled.span`
  font-size: 13px;
`;

const Dialog = styled.div`
  position: absolute;
  top: 280px;
  left: 4px;
  width: 750px;
  max-width: calc(100% - 8px);
  background: linear-gradient(90deg, #fff, #f0f0f0);
  box-shadow: 0 0 1px #555, 0 3px 8px rgba(0, 0, 0, 0.5);
`;

const DialogTitle = styled.div`
  display: flex;
  gap: 5px;
  align-items: center;
  height: 30px;
  padding: 0 9px 0 8px;
  background: #fff;
`;

const DialogClose = styled(PlainButton)`
  width: 14px;
  height: 14px;
`;

const DialogBody = styled.div`
  padding: 2px 6px 5px 4px;
`;

const InfoLine = styled.div`
  display: flex;
  gap: 8px;
  align-items: center;
  height: 25px;
  padding-left: 2px;
`;

const LatinText = styled.span`
  font-size: 13px;
`;

const TabList = styled.div`
  display: flex;
  align-items: flex-end;
  height: 27px;
  padding-left: 2px;
`;

const DialogTab = styled(PlainButton)`
  height: ${p => p.$active ? 25 : 23}px;
  padding: 0 7px;
  border: 1px solid #dcdcdc;
  border-bottom: 0;
  background: ${p => p.$active ? '#fff' : '#f0f0f0'};

  & + & {
    margin-left: -1px;
  }
`;

const TabPanel = styled.div`
  padding: 6px 3px 5px 5px;
  border: 1px solid #dcdcdc;
  background: #fff;
`;

const RadioLabel = styled.label`
  display: flex;
  align-items: center;
  gap: 4px;
  margin-bottom: 9px;
  padding-left: 2px;
  line-height: 17px;
`;

const Radio = styled.input.attrs({type: 'radio'})`
  width: 13px;
  height: 13px;
  border: 1px solid #333;
  border-radius: 50%;
  background: #fff;
  appearance: none;

  &:checked {
    background: radial-gradient(#333 0 3px, #fff 4px);
  }
`;

const DataGroup = styled.fieldset`
  min-width: 0;
  margin: 0 0 6px;
  padding: 6px 5px 4px;
  border: 1px solid #dcdcdc;

  legend {
    margin-left: 3px;
    padding: 0 3px;
  }
`;

const TableFrame = styled.div`
  height: 126px;
  padding: 0 1px;
  border: 1px solid #a0a0a0;
`;

const Table = styled.table`
  border-collapse: collapse;
  table-layout: fixed;
  width: 452px;

  th, td {
    padding: 0;
    border-right: 1px solid #dcdcdc;
    text-align: center;
  }

  th {
    height: 39px;
    font-size: 12px;
    line-height: 17px;
  }

  td {
    height: 20px;
    background: #0078d7;
    color: #fff;
  }
`;

const Col = styled.col`
  width: ${p => p.$width}px;
`;

const PanelButtons = styled.div`
  display: flex;
  gap: 5px;
`;

const PushButton = styled(PlainButton)`
  height: 23px;
  padding: 0 ${p => p.$wide ? 8 : 2}px;
  border: 1px solid #adadad;
  background: #e1e1e1;
`;

const DialogButtons = styled.div`
  display: flex;
  justify-content: space-around;
  padding-top: 10px;
`;

const Watermark = styled.div`
  position: absolute;
  top: 489px;
  left: 286px;
  color: rgba(255, 255, 255, 0.6);
  font: 34px/40px "Liberation Mono", monospace;
  text-shadow: 1px 1px 1px #777;
  pointer-events: none;
  white-space: nowrap;

  span {
    font: 300 39px/40px "Noto Sans CJK SC", sans-serif;
  }
`;
